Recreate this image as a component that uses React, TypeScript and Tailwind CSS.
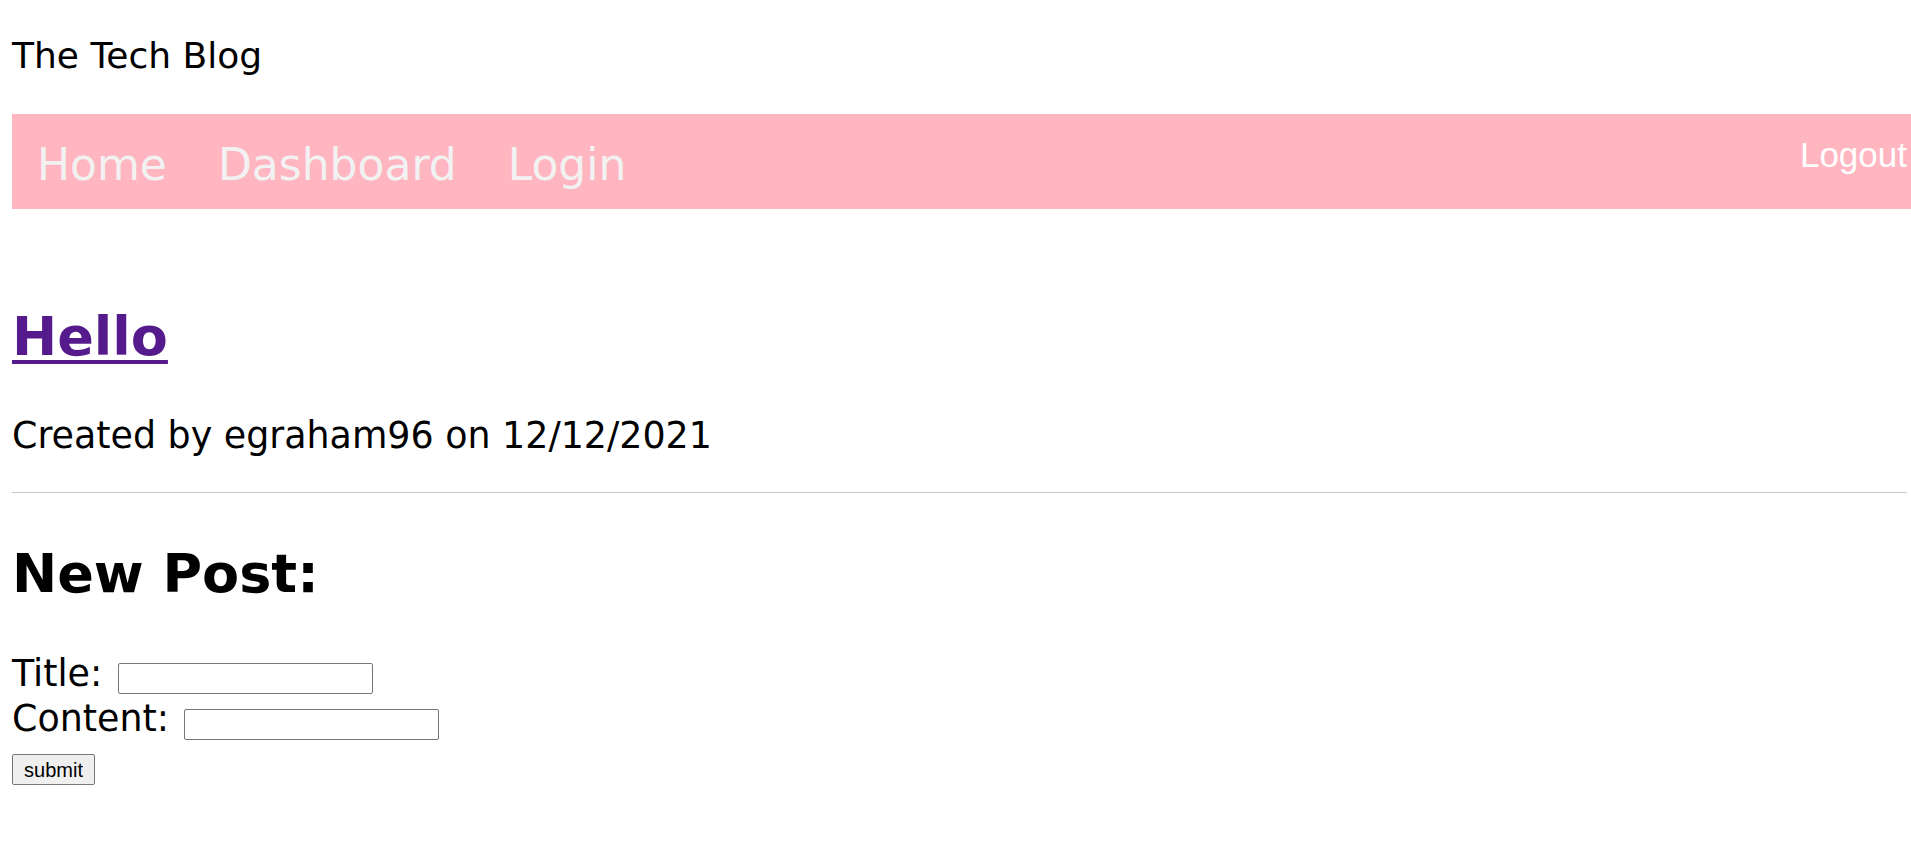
import React from "react";

export default function App() {
  return (
    <div
      className="min-h-[852px] bg-white pl-[12px] pr-[4px] text-black"
      style={{ fontFamily: '"DejaVu Sans", Verdana, sans-serif' }}
    >
      <header className="h-[114px] pt-[35px]">
        <h1 className="text-[36px] leading-[42px] font-normal m-0">The Tech Blog</h1>
      </header>

      <nav className="-mr-[4px] flex h-[95px] items-start justify-between bg-[#ffb6c1] pr-[4px]">
        <div className="flex gap-[51px] pl-[25px] pt-[25px] text-[44px] leading-[51px] text-[#f2f2f2]">
          <a href="#">Home</a>
          <a href="#">Dashboard</a>
          <a href="#">Login</a>
        </div>
        <button
          className="pt-[21px] text-[35px] leading-[40px] text-white"
          style={{ fontFamily: '"Liberation Sans", Arial, sans-serif' }}
        >
          Logout
        </button>
      </nav>

      <main>
        <section className="mt-[96px]">
          <h2 className="m-0 text-[54px] font-bold leading-[63px]">
            <a
              href="#"
              className="text-[#551a8b] underline decoration-[4px] underline-offset-[5px]"
            >
              Hello
            </a>
          </h2>
          <p className="mt-[47px] text-[36.4px] leading-[42px]">Created by egraham96 on 12/12/2021</p>
        </section>

        <hr className="mt-[35px] border-0 border-t border-[#c8c8c8]" />

        <section>
          <h2 className="mt-[49px] text-[54px] font-bold leading-[63px]">New Post:</h2>
          <form className="mt-[48px]" onSubmit={(e) => e.preventDefault()}>
            <div className="flex h-[45px] items-start">
              <label htmlFor="title" className="text-[36.4px] leading-[42px]">
                Title:
              </label>
              <input
                id="title"
                type="text"
                className="ml-[16px] mt-[10px] h-[31px] w-[255px] rounded-[2px] border border-[#767676] bg-white"
              />
            </div>
            <div className="flex h-[56px] items-start">
              <label htmlFor="content" className="text-[36.4px] leading-[42px]">
                Content:
              </label>
              <input
                id="content"
                type="text"
                className="ml-[15px] mt-[11px] h-[31px] w-[255px] rounded-[2px] border border-[#767676] bg-white"
              />
            </div>
            <button
              type="submit"
              className="flex h-[31px] w-[83px] items-center justify-center rounded-[2px] border border-[#767676] bg-[#efefef] text-[20px] leading-none text-black"
              style={{ fontFamily: '"Liberation Sans", Arial, sans-serif' }}
            >
              submit
            </button>
          </form>
        </section>
      </main>
    </div>
  );
}
